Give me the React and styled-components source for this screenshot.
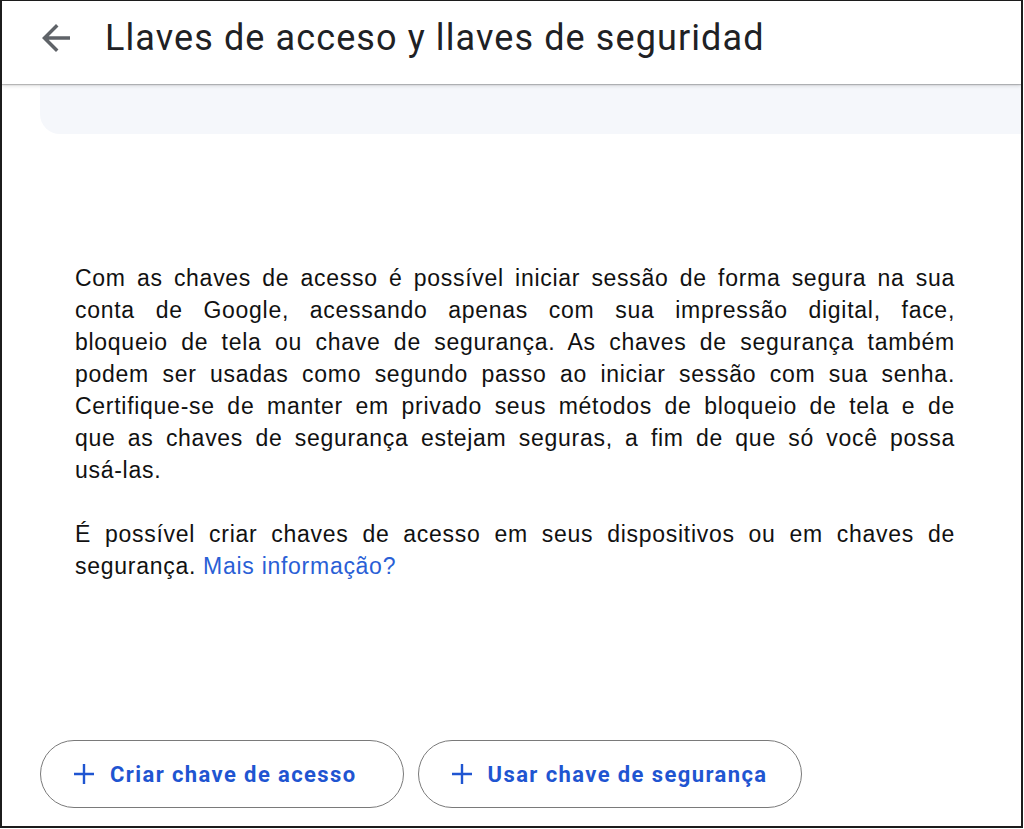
import React from "react";
import styled, {createGlobalStyle} from "styled-components";

const GlobalStyle = createGlobalStyle`
  html, body {
    margin: 0;
    padding: 0;
    background: #fff;
  }
`

const Frame = styled('div')`
  box-sizing: border-box;
  width: 1023px;
  height: 828px;
  border: 2px solid #1c1c1c;
  border-top-width: 1px;
  display: flex;
  flex-direction: column;
  overflow: hidden;
  background: #fff;
`

const Header = styled('header')`
  position: relative;
  z-index: 2;
  box-sizing: border-box;
  height: 83px;
  flex-shrink: 0;
  display: flex;
  align-items: center;
  padding: 0 0 10px 33px;
  background: #fff;
  box-shadow: 0 1px 1px rgba(0, 0, 0, 0.22), 0 2px 4px rgba(0, 0, 0, 0.12);
`

const BackButton = styled('button')`
  border: none;
  background: none;
  padding: 0;
  width: 42px;
  height: 42px;
  display: flex;
  align-items: center;
  justify-content: center;
  color: #5f6368;
  margin-right: 28px;
  cursor: pointer;
`

const Title = styled('h1')`
  margin: 0;
  font-family: Roboto, "Noto Sans", sans-serif;
  font-weight: 400;
  font-size: 36px;
  letter-spacing: 1.1px;
  color: #202124;
`

const InfoCard = styled('div')`
  margin-left: 38px;
  height: 50px;
  flex-shrink: 0;
  background: #f5f7fb;
  border-bottom-left-radius: 20px;
`

const Body = styled('div')`
  padding: 128px 0 0 73px;
  width: 880px;
  font-family: "Liberation Sans", Arial, sans-serif;
  font-size: 23px;
  letter-spacing: 0.72px;
  line-height: 32px;
  color: #111;
`

const Paragraph = styled('p')`
  margin: 0 0 32px;
`

// each line of the copy is set on its own, stretched to the column like the original
const Line = styled('span')`
  display: block;
  white-space: nowrap;
  text-align: justify;
  text-align-last: ${props => props.$last ? 'left' : 'justify'};
`

const InfoLink = styled('a')`
  color: #2a5fd6;
  text-decoration: none;
`

const Actions = styled('div')`
  margin-top: auto;
  display: flex;
  gap: 14px;
  padding: 0 0 18px 38px;
`

const ActionButton = styled('button')`
  box-sizing: border-box;
  height: 68px;
  display: flex;
  align-items: center;
  gap: 15px;
  padding: 0 ${props => props.$right || 36}px 0 32px;
  border: 1.5px solid #7a7a7a;
  border-radius: 34px;
  background: #fff;
  color: #1f55d1;
  font-family: Roboto, "Noto Sans", sans-serif;
  font-weight: 700;
  font-size: 22px;
  letter-spacing: 1.4px;
  cursor: pointer;
`

const BackIcon = () => (
  <svg width="42" height="42" viewBox="0 0 24 24" fill="currentColor">
    <path d="M20 11H7.83l5.59-5.59L12 4l-8 8 8 8 1.41-1.41L7.83 13H20v-2z"/>
  </svg>
)

const PlusIcon = () => (
  <svg width="22" height="22" viewBox="0 0 22 22" stroke="currentColor" strokeWidth="2.4" fill="none">
    <path d="M11 1v20M1 11h20"/>
  </svg>
)

const introLines = [
  'Com as chaves de acesso é possível iniciar sessão de forma segura na sua',
  'conta de Google, acessando apenas com sua impressão digital, face,',
  'bloqueio de tela ou chave de segurança. As chaves de segurança também',
  'podem ser usadas como segundo passo ao iniciar sessão com sua senha.',
  'Certifique-se de manter em privado seus métodos de bloqueio de tela e de',
  'que as chaves de segurança estejam seguras, a fim de que só você possa',
  'usá-las.',
]

const App = () => {
  return (
    <>
      <GlobalStyle/>
      <Frame>
        <Header>
          <BackButton aria-label="Voltar"><BackIcon/></BackButton>
          <Title>Llaves de acceso y llaves de seguridad</Title>
        </Header>
        <InfoCard/>
        <Body>
          <Paragraph>
            {introLines.map((line, index) => (
              <Line key={index} $last={index === introLines.length - 1}>{line}</Line>
            ))}
          </Paragraph>
          <Paragraph>
            <Line>É possível criar chaves de acesso em seus dispositivos ou em chaves de</Line>
            <Line $last>segurança. <InfoLink href="#">Mais informação?</InfoLink></Line>
          </Paragraph>
        </Body>
        <Actions>
          <ActionButton $right={46}><PlusIcon/>Criar chave de acesso</ActionButton>
          <ActionButton $right={33}><PlusIcon/>Usar chave de segurança</ActionButton>
        </Actions>
      </Frame>
    </>
  )
}

export default App
